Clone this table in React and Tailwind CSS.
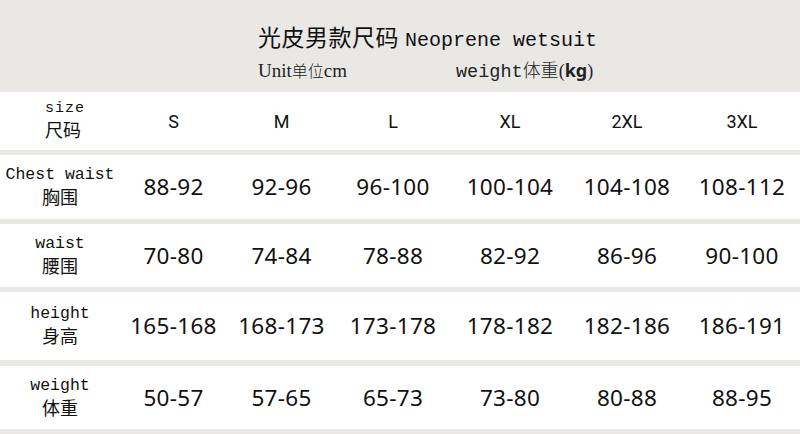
import React from "react";

const cols = "grid grid-cols-[120px_107px_109px_114px_120px_114px_116px] items-center bg-white";
const mono = "font-['Liberation_Mono','DejaVu_Sans_Mono',monospace]";
const cjk = "font-['Noto_Sans_CJK_SC','Noto_Sans',sans-serif]";
const num = "font-['Noto_Sans','Open_Sans',sans-serif]";
const narrow = "font-['Roboto','Liberation_Sans',sans-serif]";
const serif = "font-['Liberation_Serif',serif]";

const rows = [
  { en: "Chest waist", zh: "胸围", h: "h-[64px]", gap: "mt-[5px]", vals: ["88-92", "92-96", "96-100", "100-104", "104-108", "108-112"] },
  { en: "waist", zh: "腰围", h: "h-[63px]", gap: "mt-[5px]", vals: ["70-80", "74-84", "78-88", "82-92", "86-96", "90-100"] },
  { en: "height", zh: "身高", h: "h-[68px]", gap: "mt-[5px]", vals: ["165-168", "168-173", "173-178", "178-182", "182-186", "186-191"] },
  { en: "weight", zh: "体重", h: "h-[63px]", gap: "mt-[6px]", vals: ["50-57", "57-65", "65-73", "73-80", "80-88", "88-95"] },
];

function Label({ en, zh }) {
  return (
    <div className="flex flex-col items-center">
      <span className={`${mono} text-[16.5px] leading-[18px] text-[#111]`}>{en}</span>
      <span className={`${cjk} text-[18px] leading-[24px] text-[#111]`}>{zh}</span>
    </div>
  );
}

export default function App() {
  return (
    <div className="w-[800px] h-[434px] overflow-hidden bg-[#e9e8e5] flex flex-col">
      <div className="h-[92px] pl-[258px] pt-[21px] flex flex-col">
        <div className="flex items-baseline text-[#111] leading-[30px]">
          <span className={`${cjk} text-[23px] tracking-[0.5px]`}>光皮男款尺码</span>
          <span className={`${mono} text-[20px] ml-[6px]`}>Neoprene wetsuit</span>
        </div>
        <div className="flex items-baseline text-[#222] leading-[24px] mt-[1px]">
          <div className="w-[198px] flex items-baseline">
            <span className={`${serif} text-[19px]`}>Unit</span>
            <span className={`${cjk} text-[16px] font-light`}>单位</span>
            <span className={`${serif} text-[19px]`}>cm</span>
          </div>
          <span className={`${mono} text-[18.5px]`}>weight</span>
          <span className={`${cjk} text-[18px] font-light`}>体重</span>
          <span className={`${serif} text-[18px]`}>(</span>
          <span className={`${num} text-[18px] font-bold`}>kg</span>
          <span className={`${serif} text-[18px]`}>)</span>
        </div>
      </div>

      <div className={`${cols} h-[58px]`}>
        <div className="flex flex-col items-start pl-[45px]">
          <span className={`${mono} text-[15px] leading-[16px] tracking-[1px] text-[#111]`}>size</span>
          <span className={`${cjk} text-[18px] leading-[24px] text-[#111]`}>尺码</span>
        </div>
        {["S", "M", "L", "XL", "2XL", "3XL"].map((s) => (
          <div key={s} className={`${narrow} text-center text-[18px] text-[#111]`}>{s}</div>
        ))}
      </div>

      {rows.map((r) => (
        <div key={r.en} className={`${cols} ${r.h} ${r.gap}`}>
          <Label en={r.en} zh={r.zh} />
          {r.vals.map((v) => (
            <div key={v} className={`${num} text-center text-[22.5px] text-[#111] tracking-[0.3px]`}>{v}</div>
          ))}
        </div>
      ))}
    </div>
  );
}
